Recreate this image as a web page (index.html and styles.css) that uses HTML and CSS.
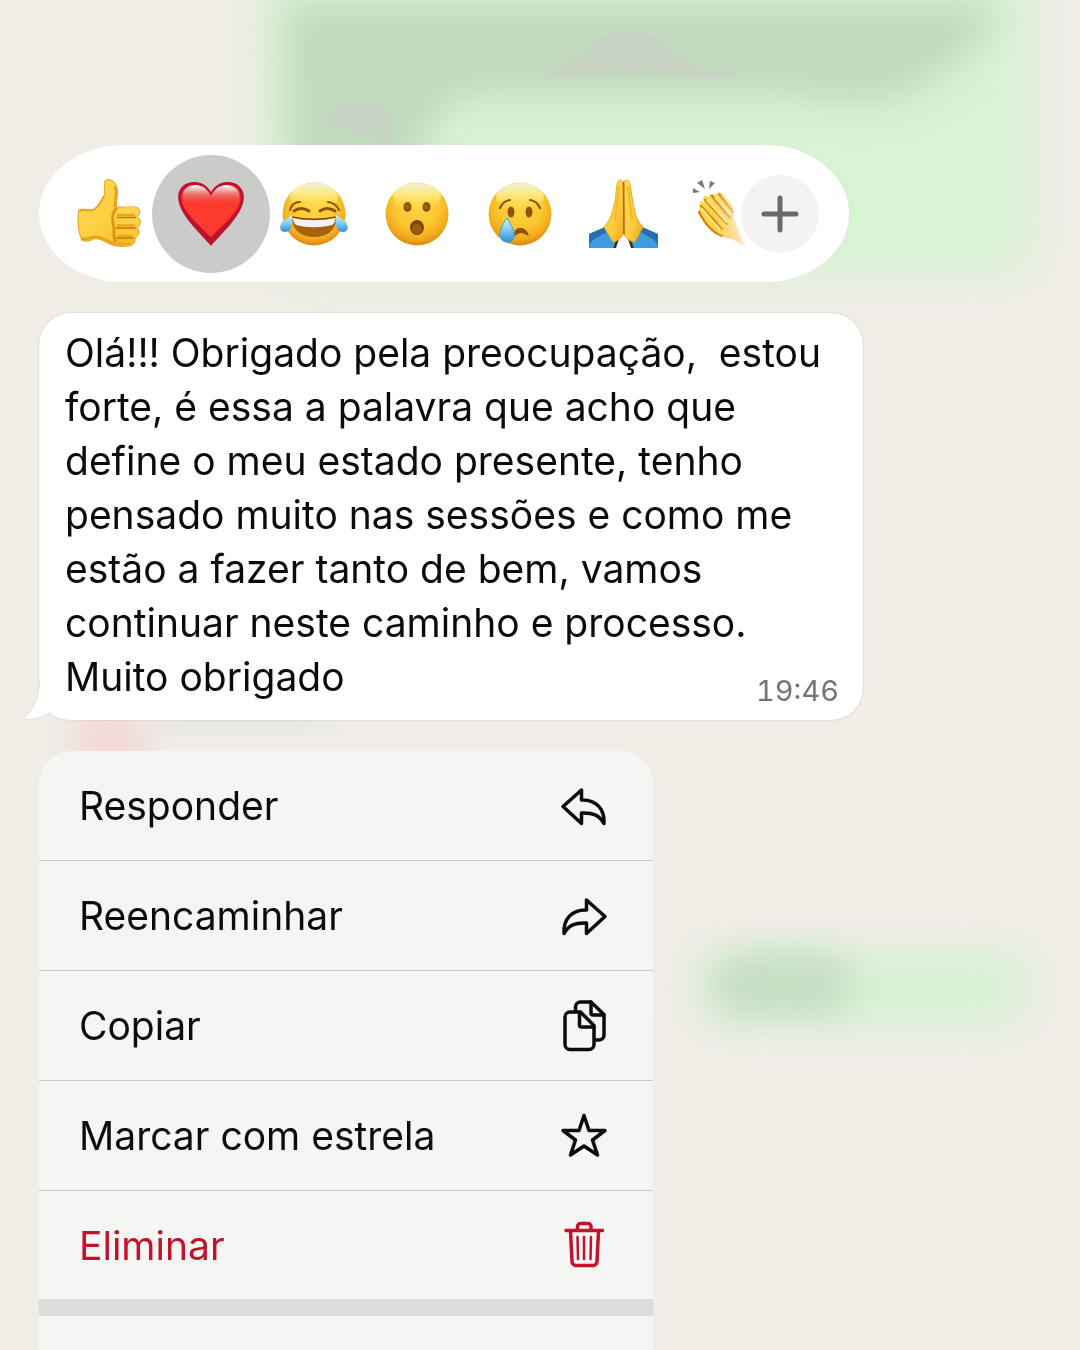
FILE: index.html
```html
<!DOCTYPE html>
<html lang="pt">
<head>
    <meta charset="UTF-8">
    <meta name="viewport" content="width=device-width, initial-scale=1.0">
    <title>Mensagem</title>
    <link rel="stylesheet" href="styles.css">
</head>
<body>
    <!-- blurred chat behind the menu -->
    <svg class="backdrop" viewBox="0 0 1080 1350" preserveAspectRatio="none" aria-hidden="true">
        <defs>
            <filter id="soft" x="-50%" y="-50%" width="200%" height="200%"><feGaussianBlur stdDeviation="20"/></filter>
            <filter id="softer" x="-50%" y="-50%" width="200%" height="200%"><feGaussianBlur stdDeviation="18"/></filter>
            <pattern id="grain" width="4" height="4" patternUnits="userSpaceOnUse">
                <path d="M0 0h2v2H0zM2 2h2v2H2z" fill="#cbcbc9"/>
            </pattern>
        </defs>
        <rect x="262" y="-60" width="772" height="334" rx="30" fill="#d8f2d4" filter="url(#soft)"/>
        <path d="M285 4H990C1010 30 960 60 930 80C890 108 850 104 800 96H470C430 96 440 150 390 180H290Z" fill="#c1d9bc" filter="url(#softer)"/>
        <path d="M549 76C560 60 570 64 582 53C600 35 618 30 634 31C655 32 668 50 686 60C700 70 712 71 736 71L734 77C690 80 670 73 630 73C600 73 590 77 549 76Z" fill="url(#grain)"/>
        <path d="M340 106H382L397 122L386 128L397 144H378L384 128C370 137 345 134 327 121Z" fill="url(#grain)"/>
        <rect x="700" y="952" width="330" height="72" rx="34" fill="#d6f1d3" filter="url(#soft)"/>
        <rect x="712" y="956" width="140" height="58" rx="28" fill="#c4dcc1" filter="url(#softer)"/>
        <rect x="76" y="712" width="66" height="60" fill="#f3d6d4" filter="url(#softer)"/>
        <rect x="160" y="700" width="160" height="24" fill="#dfe3dc" filter="url(#softer)"/>
    </svg>

    <!-- gradients shared by the emoji -->
    <svg class="defs" aria-hidden="true">
        <defs>
            <radialGradient id="face" cx="50%" cy="36%" r="66%">
                <stop offset="0" stop-color="#ffd746"/>
                <stop offset=".55" stop-color="#fcc62f"/>
                <stop offset=".82" stop-color="#f2a81c"/>
                <stop offset="1" stop-color="#d47f10"/>
            </radialGradient>
            <linearGradient id="shine" x1="0" y1="0" x2="0" y2="1">
                <stop offset="0" stop-color="#eef1dc"/>
                <stop offset=".45" stop-color="#fff08a" stop-opacity=".8"/>
                <stop offset="1" stop-color="#ffd746" stop-opacity="0"/>
            </linearGradient>
            <linearGradient id="tear" x1="0" y1="0" x2="0" y2="1">
                <stop offset="0" stop-color="#d6f6ff"/>
                <stop offset=".5" stop-color="#7fcbf3"/>
                <stop offset="1" stop-color="#2e8bdc"/>
            </linearGradient>
            <linearGradient id="skin" x1="0" y1="0" x2="1" y2="1">
                <stop offset="0" stop-color="#ffdd5c"/>
                <stop offset=".6" stop-color="#fdcb3c"/>
                <stop offset="1" stop-color="#eda41c"/>
            </linearGradient>
            <linearGradient id="heart-top" x1="0" y1="0" x2="0" y2="1">
                <stop offset="0" stop-color="#fff"/>
                <stop offset=".4" stop-color="#e9827f"/>
                <stop offset="1" stop-color="#f8392e" stop-opacity="0"/>
            </linearGradient>
            <linearGradient id="fade" x1="0" y1="0" x2="1" y2="0">
                <stop offset=".4" stop-color="#fff" stop-opacity="0"/>
                <stop offset="1" stop-color="#fff" stop-opacity=".9"/>
            </linearGradient>
        </defs>
    </svg>

    <main class="screen">
        <div class="reactions">
            <button class="reaction" type="button" aria-label="Gosto">
                <svg viewBox="0 0 70 70">
                    <path d="M5 31C8 29 14 31 19 31C24 29 27 23 30 17C32 12 29 4 31 2C34-1 40 1 42 6C45 13 42 20 42 28L61 28C67 29 67 35 63 38C68 40 67 47 63 49C67 52 65 57 61 59C62 63 59 67 54 67C46 68 39 67 34 64C28 61 24 59 20 60C16 62 11 63 8 61C4 55 3 38 5 31Z" fill="url(#skin)" stroke="#e8a31c" stroke-width="1"/>
                    <path d="M5 32C8 30 14 32 19 31C24 29 27 23 30 17" fill="none" stroke="#eda51c" stroke-width="2"/>
                    <path d="M41 7C44 13 41 20 41 28" fill="none" stroke="#e9a01b" stroke-width="3"/>
                    <path d="M40 32C43 28 58 27 61 28C66 30 66 36 62 38H43" fill="#ffd34a"/>
                    <path d="M43 38H62C68 41 66 48 62 49H42Z" fill="#ffd047"/>
                    <path d="M42 49H62C66 51 65 58 60 59H42Z" fill="#fcc837"/>
                    <path d="M42 59H60C61 64 58 67 53 67C46 67 40 66 42 59Z" fill="#f6b92b"/>
                    <path d="M43 38.500H62M42 49H62M42 59H60" fill="none" stroke="#b87a0c" stroke-width="1.500"/>
                    <path d="M43 36H61M43 46.500H61M43 57H59M42 65H56" fill="none" stroke="#eda41c" stroke-width="2.500"/>
                    <path d="M43 29C36 35 39 43 40 50C40 56 39 59 42 63" fill="none" stroke="#d8920f" stroke-width="2.500"/>
                    <path d="M7 60C14 61 18 57 23 58C29 59 34 63 41 65" fill="none" stroke="#e8a31c" stroke-width="3"/>
                </svg>
            </button>
            <button class="reaction selected" type="button" aria-label="Coração" aria-pressed="true">
                <svg viewBox="0 0 70 70">
                    <path d="M35 67C29 59 7 40 3 24C-1 9 10 2 20 3C28 4 32 8 35 13C38 8 42 4 50 3C60 2 71 9 67 24C63 40 41 59 35 67Z" fill="#be122d"/>
                    <path d="M35 58C27 50 9 35 6 23C3 11 11 5 20 6C28 7 31 10 35 17C39 10 42 7 50 6C59 5 67 11 64 23C61 35 43 50 35 58Z" fill="#fb392d"/>
                    <path d="M8 24C3 10 14 6 20 6C28 7 31 10 35 17C39 10 42 7 50 6C56 6 67 10 62 24C50 27 20 27 8 24Z" fill="url(#heart-top)"/>
                </svg>
            </button>
            <button class="reaction" type="button" aria-label="Riso">
                <svg viewBox="0 0 70 70">
                    <circle cx="35" cy="35" r="31.5" fill="url(#face)"/>
                    <ellipse cx="35" cy="18" rx="24" ry="14" fill="url(#shine)"/>
                    <path d="M11 31Q13 23 21 23M49 23Q57 24 60 31" fill="none" stroke="#8c5205" stroke-width="2" stroke-linecap="round"/>
                    <path d="M15 32Q22 27 30 32M41 32Q48 27 56 32" fill="none" stroke="#8c5205" stroke-width="3" stroke-linecap="round"/>
                    <path d="M13 40C28 41 42 41 57 40C57 51 48 58 35 58C22 58 14 51 13 40Z" fill="#a8620b"/>
                    <path d="M14 39C28 42 42 42 56 39C56 43 55 45 53 46C41 49 29 49 17 46C15 44 14 42 14 39Z" fill="#f5f3f2"/>
                    <path d="M13 38C28 41 42 41 57 38" fill="none" stroke="#7e4a08" stroke-width="1.5"/>
                    <path d="M13 36C14 44 13 53 6 53C0 53 0 46 4 42C8 40 10 38 13 36Z" fill="url(#tear)"/>
                    <path d="M57 36C56 44 57 53 64 53C70 53 70 46 66 42C62 40 60 38 57 36Z" fill="url(#tear)"/>
                </svg>
            </button>
            <button class="reaction" type="button" aria-label="Surpresa">
                <svg viewBox="0 0 70 70">
                    <circle cx="35" cy="35" r="31.5" fill="url(#face)"/>
                    <ellipse cx="35" cy="18" rx="24" ry="14" fill="url(#shine)"/>
                    <ellipse cx="25.500" cy="28" rx="4" ry="5" fill="#8c5205"/>
                    <ellipse cx="44.500" cy="28" rx="4" ry="5" fill="#8c5205"/>
                    <circle cx="25" cy="28" r="2" fill="#a5670f"/>
                    <circle cx="44" cy="28" r="2" fill="#a5670f"/>
                    <ellipse cx="35" cy="48.500" rx="7" ry="7.500" fill="#7b4606"/>
                    <ellipse cx="35" cy="50" rx="5" ry="5" fill="#9b5d12"/>
                </svg>
            </button>
            <button class="reaction" type="button" aria-label="Tristeza">
                <svg viewBox="0 0 70 70">
                    <circle cx="35" cy="35" r="31.500" fill="url(#face)"/>
                    <ellipse cx="35" cy="18" rx="24" ry="14" fill="url(#shine)"/>
                    <path d="M15 29Q18 22 25 21M45 21Q52 22 55 29" fill="none" stroke="#8c5205" stroke-width="2.200" stroke-linecap="round"/>
                    <ellipse cx="26" cy="33" rx="3.500" ry="5.500" fill="#8f5407"/>
                    <ellipse cx="44" cy="33" rx="3.500" ry="5.500" fill="#8f5407"/>
                    <path d="M30 54C31 48 40 48 43 56C38 52 33 53 30 56Z" fill="#8c5205" stroke="#8c5205" stroke-width="1.500" stroke-linejoin="round"/>
                    <path d="M22 39C17 46 15 51 15 55C15 60 18 63 22 63C27 63 30 60 29 55C29 50 25 45 22 39Z" fill="url(#tear)" stroke="#3d9ae0"/>
                </svg>
            </button>
            <button class="reaction" type="button" aria-label="Mãos juntas">
                <svg viewBox="0 0 70 70">
                    <path d="M1 55L17 48L29 62L25 69H1Z" fill="#3d9be0"/>
                    <path d="M70 55L54 48L41 62L46 69H70Z" fill="#3d9be0"/>
                    <path d="M1 55L17 48L19 53L6 60L1 66ZM70 55L54 48L52 53L65 60L70 66Z" fill="#2a6db2"/>
                    <path d="M25 69L28 62L31 60L28 69ZM46 69L43 62L40 60L43 69Z" fill="#26323a"/>
                    <path d="M35 3C32-1 30 2 29 5L27 23C24 31 25 38 16 48L25 63C29 62 34 59 36 54Z" fill="url(#skin)" stroke="#f0aa20"/>
                    <path d="M36 3C39-1 42 2 42 6L45 24C47 32 46 38 55 48L47 63C41 62 37 59 36 54Z" fill="url(#skin)" stroke="#e99f1b"/>
                    <path d="M35.500 3L36 55" stroke="#a8690d" stroke-width="1.500"/>
                    <path d="M31 8L29 25L27 41M40 8L42 25L44 41" fill="none" stroke="#f3b52a" stroke-width="2"/>
                </svg>
            </button>
            <button class="reaction" type="button" aria-label="Aplauso">
                <svg viewBox="0 0 70 70">
                    <path d="M2 9L9 13L2 14ZM6 4L11 1L14 10ZM19 2L24 4L18 10Z" fill="#777b7c"/>
                    <path d="M9 27C7 23 11 21 13 23C10 18 14 15 17 18C19 14 22 14 24 16C28 11 32 14 35 19L42 27L43 40L55 68L41 60C32 59 22 53 15 43C9 37 6 32 9 27Z" fill="url(#skin)"/>
                    <path d="M8 33C13 43 20 53 31 57M10 27L31 50M14 21L36 45M21 17L39 39M28 15L42 33" fill="none" stroke="#d18a11" stroke-width="2.500" stroke-linecap="round"/>
                    <path d="M10 29L29 51M16 21L36 43M24 18L40 36M32 16L42 28" fill="none" stroke="#ffe17a" stroke-width="2.500"/>
                    <rect x="0" y="13" width="58" height="57" fill="url(#fade)"/>
                </svg>
            </button>
            <button class="more" type="button" aria-label="Mais reações">
                <svg viewBox="0 0 40 40">
                    <path d="M20 4V36M4 20H36" stroke="#6a6a6a" stroke-width="5" stroke-linecap="round"/>
                </svg>
            </button>
        </div>

        <article class="bubble">
            <svg class="tail" viewBox="0 0 52 62" aria-hidden="true">
                <path d="M16 0V20C16 37 10 49 1.500 58Q0 61 6 60.500C14 60 21 57 26 53.500C31 59 38 61 51 61V0Z" fill="#fff"/>
                <path d="M15.500 20C15.500 37 10 49 1.500 58Q0 61 6 60.500C14 60 21 57 26 53.500C31 59 38 61.500 51 61.500" fill="none" stroke="#e2dfdb"/>
            </svg>
            <p>Olá!!! Obrigado pela preocupação,&nbsp; estou forte, é essa a palavra que acho que define o meu estado presente, tenho pensado muito nas sessões e como me estão a fazer tanto de bem, vamos continuar neste caminho e processo.</p>
            <div class="last-line">
                <p>Muito obrigado</p>
                <time datetime="19:46">19:46</time>
            </div>
        </article>

        <div class="menu">
            <button class="menu-item" type="button">
                <span>Responder</span>
                <svg class="icon" viewBox="0 0 48 48">
                    <path d="M3 24.500L21.500 8V18C36 17.500 45 27 44 41.500C39 33 33 30.500 21.500 31V41.500Z"/>
                </svg>
            </button>
            <button class="menu-item" type="button">
                <span>Reencaminhar</span>
                <svg class="icon" viewBox="0 0 48 48">
                    <path d="M45 24.500L26.500 8V18C12 17.500 3 27 4 41.500C9 33 15 30.500 26.500 31V41.500Z"/>
                </svg>
            </button>
            <button class="menu-item" type="button">
                <span>Copiar</span>
                <svg class="icon icon-copy" viewBox="0 0 48 56">
                    <path d="M20.500 14H10a5 5 0 0 0-5 5V46.500a5 5 0 0 0 5 5H29a5 5 0 0 0 5-5V27.500Z"/>
                    <path d="M19.500 14V27a2 2 0 0 0 2 2H34"/>
                    <path d="M15.500 13V9a5 5 0 0 1 5-5H31L44 16.500V37a5 5 0 0 1-5 5H35"/>
                    <path d="M31 4V15a2 2 0 0 0 2 2H44"/>
                </svg>
            </button>
            <button class="menu-item" type="button">
                <span>Marcar com estrela</span>
                <svg class="icon" viewBox="0 0 48 48">
                    <path d="M24 3.500L29 18.500H45L32.500 28L37.500 43L24 34L10.500 43L15.500 28L3 18.500H19Z"/>
                </svg>
            </button>
            <button class="menu-item danger" type="button">
                <span>Eliminar</span>
                <svg class="icon" viewBox="0 0 48 48">
                    <path d="M6 9.500H42.500M17.500 9V5.500a3 3 0 0 1 3-3H28a3 3 0 0 1 3 3V9"/>
                    <path d="M10.500 10L12 40.500a4 4 0 0 0 4 4H33a4 4 0 0 0 4-4L38.500 10"/>
                    <path d="M17.500 16L18 38M24 16V38M31 16L30.500 38" stroke-width="2.500"/>
                </svg>
            </button>
            <div class="menu-gap"></div>
        </div>
    </main>
</body>
</html>
```
FILE: styles.css
```css
* {
    margin: 0;
    padding: 0;
    box-sizing: border-box;
}

body {
    font-family: Inter, "Liberation Sans", sans-serif;
    background-color: #f0ede7;
    color: #0b0b0b;
}

button {
    border: none;
    background: none;
    font: inherit;
    color: inherit;
    cursor: pointer;
}

svg {
    display: block;
}

.backdrop {
    position: fixed;
    top: 0;
    left: 0;
    width: 100%;
    height: 100%;
    z-index: -1;
}

.defs {
    position: absolute;
    width: 0;
    height: 0;
}

.screen {
    display: flex;
    flex-direction: column;
    gap: 31px;
    height: 100vh;
    padding: 145px 39px 0;
    overflow: hidden;
}

/* Reactions */
.reactions {
    display: flex;
    align-items: center;
    flex-shrink: 0;
    width: 100%;
    max-width: 810px;
    height: 137px;
    padding: 0 29px 0 18px;
    background-color: #fff;
    border-radius: 84px / 68px;
}

.reaction {
    display: flex;
    justify-content: center;
    align-items: center;
    flex: 0 0 103px;
    height: 118px;
}

.reaction svg {
    width: 70px;
    height: 70px;
}

.reaction.selected {
    flex-basis: 118px;
    margin: 0 -8px;
    border-radius: 50%;
    background-color: #cbcbca;
}

/* sits over the end of the emoji row */
.more {
    display: flex;
    justify-content: center;
    align-items: center;
    flex: 0 0 78px;
    height: 78px;
    margin-left: -36px;
    border-radius: 50%;
    background-color: #f3f3f3;
    box-shadow: 0 0 4px 5px #fff;
    z-index: 1;
}

.more svg {
    width: 40px;
    height: 40px;
}

/* Message */
.bubble {
    position: relative;
    flex-shrink: 0;
    width: 100%;
    max-width: 824px;
    padding: 13px 24px 16px 26px;
    background-color: #fff;
    border-radius: 32px;
    box-shadow: 0 0 2px rgba(0, 0, 0, 0.2);
    font-size: 39px;
    line-height: 54px;
}

.bubble p {
    position: relative;
}

.last-line {
    display: flex;
    justify-content: space-between;
    align-items: flex-end;
}

.bubble time {
    font-size: 29px;
    line-height: 46px;
    font-variant-numeric: tabular-nums;
    color: #757575;
    margin-bottom: -10px;
}

.tail {
    position: absolute;
    left: -15px;
    bottom: -1px;
    width: 52px;
    height: 62px;
}

/* Context menu */
.menu {
    flex: 1 0 auto;
    width: 100%;
    max-width: 614px;
    background-color: #f5f5f3;
    border-radius: 32px 32px 0 0;
    overflow: hidden;
}

.menu-item {
    display: flex;
    justify-content: space-between;
    align-items: center;
    width: 100%;
    height: 110px;
    padding: 0 45px 0 40px;
    border-bottom: 1px solid #c9c9c8;
    font-size: 39px;
    text-align: left;
}

.icon {
    width: 48px;
    height: 48px;
    fill: none;
    stroke: currentColor;
    stroke-width: 3.5;
    stroke-linecap: round;
    stroke-linejoin: round;
}

.icon-copy {
    height: 56px;
}

.danger {
    height: 108px;
    border-bottom: none;
    color: #c1132d;
}

.menu-gap {
    height: 17px;
    background-color: #dcdcda;
}
```
